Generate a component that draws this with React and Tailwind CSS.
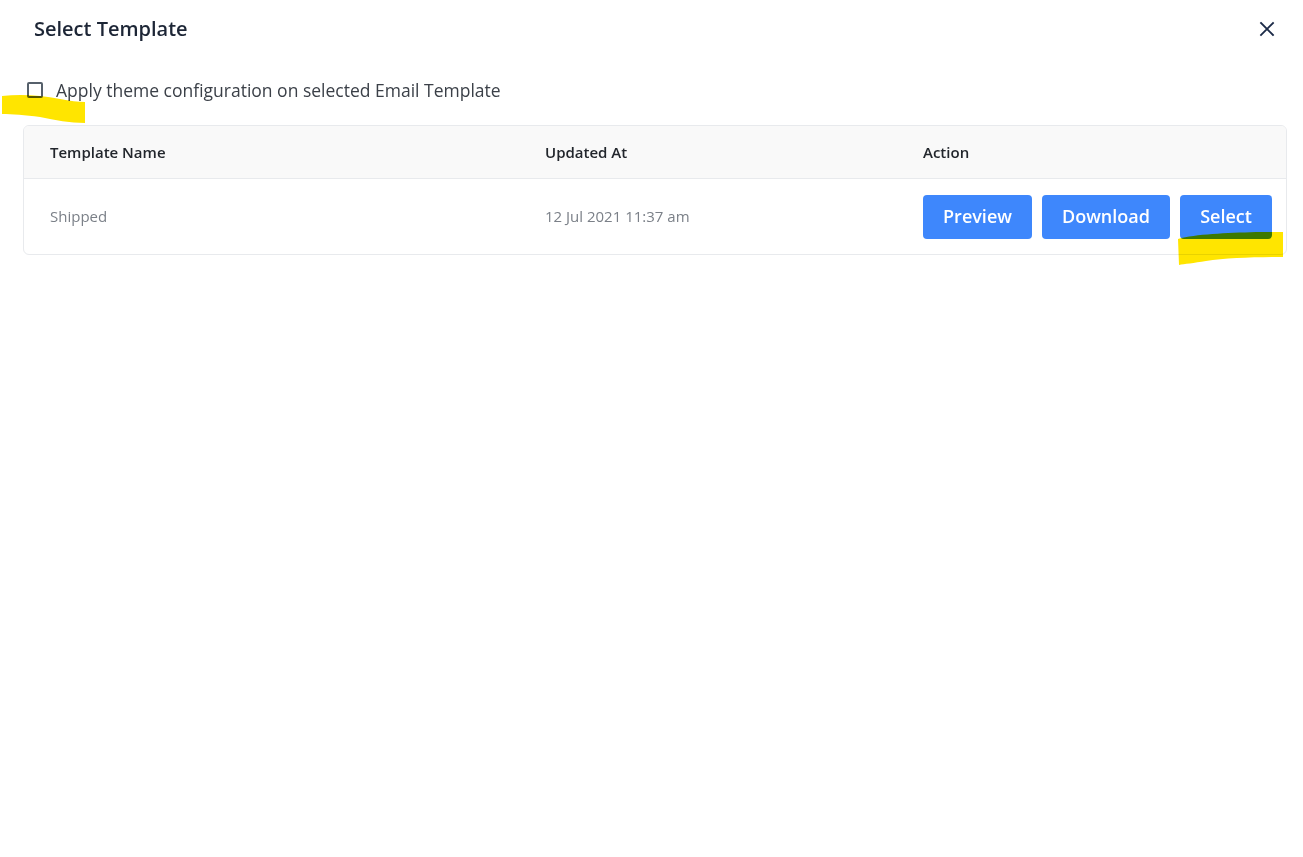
import React from 'react';

const font = { fontFamily: '"Open Sans", "Noto Sans", sans-serif' };

const Highlights = () => (
  <>
    {/* marcador amarelo sob o checkbox */}
    <svg className="absolute left-0 top-[93px] mix-blend-multiply pointer-events-none" width="90" height="34" viewBox="0 0 90 34">
      <path d="M2 3 C 20 1, 40 2, 60 6 C 70 8, 78 9, 85 9 L 85 30 C 70 30, 55 27, 40 24 C 25 22, 12 21, 2 21 Z" fill="#ffe500" />
    </svg>
    {/* marcador sob o botão Select */}
    <svg className="absolute left-[1176px] top-[229px] mix-blend-multiply pointer-events-none" width="110" height="38" viewBox="0 0 110 38">
      <path d="M2 10 C 20 5, 50 4, 80 3 L 107 3 L 107 28 C 80 28, 50 29, 30 32 C 18 34, 8 35, 3 36 Z" fill="#ffe500" />
    </svg>
  </>
);

const Button = ({ children, w }) => (
  <button className={`h-[44px] ${w} rounded-[4px] bg-[#3e87fc] text-white text-[18px] font-semibold flex items-center justify-center`}>
    {children}
  </button>
);

export default function App() {
  return (
    <div className="relative min-h-screen bg-white" style={font}>
      {/* Cabeçalho */}
      <div className="flex items-center justify-between pl-[34px] pr-[28px] pt-[14px] h-[44px]">
        <h2 className="text-[20px] font-semibold text-[#1d2636]">Select Template</h2>
        <svg width="16" height="16" viewBox="0 0 16 16" className="text-[#1c2b48]">
          <path d="M2 2 L14 14 M14 2 L2 14" stroke="currentColor" strokeWidth="1.8" strokeLinecap="square" />
        </svg>
      </div>

      {/* Checkbox */}
      <label className="flex items-center gap-[13px] pl-[27px] mt-[30px] h-[32px]">
        <span className="w-[16px] h-[16px] border-2 border-[#56606b] rounded-[2px] bg-white" />
        <span className="text-[17.5px] text-[#3b4048]">Apply theme configuration on selected Email Template</span>
      </label>

      {/* Tabela */}
      <div className="mx-[23px] w-[1264px] mt-[19px] border border-[#e8eaed] rounded-[6px] overflow-hidden">
        <div className="grid grid-cols-[495px_378px_1fr] px-[26px] h-[53px] items-center bg-[#f9f9f9] border-b border-[#e8eaed] text-[15px] font-semibold text-[#22262c]">
          <div>Template Name</div>
          <div>Updated At</div>
          <div>Action</div>
        </div>
        <div className="grid grid-cols-[495px_378px_1fr] pl-[26px] pr-[14px] h-[75px] items-center text-[15px] text-[#7b8088]">
          <div>Shipped</div>
          <div>12 Jul 2021 11:37 am</div>
          <div className="flex gap-[10px]">
            <Button w="w-[109px]">Preview</Button>
            <Button w="w-[128px]">Download</Button>
            <Button w="w-[92px]">Select</Button>
          </div>
        </div>
      </div>

      <Highlights />
    </div>
  );
}
